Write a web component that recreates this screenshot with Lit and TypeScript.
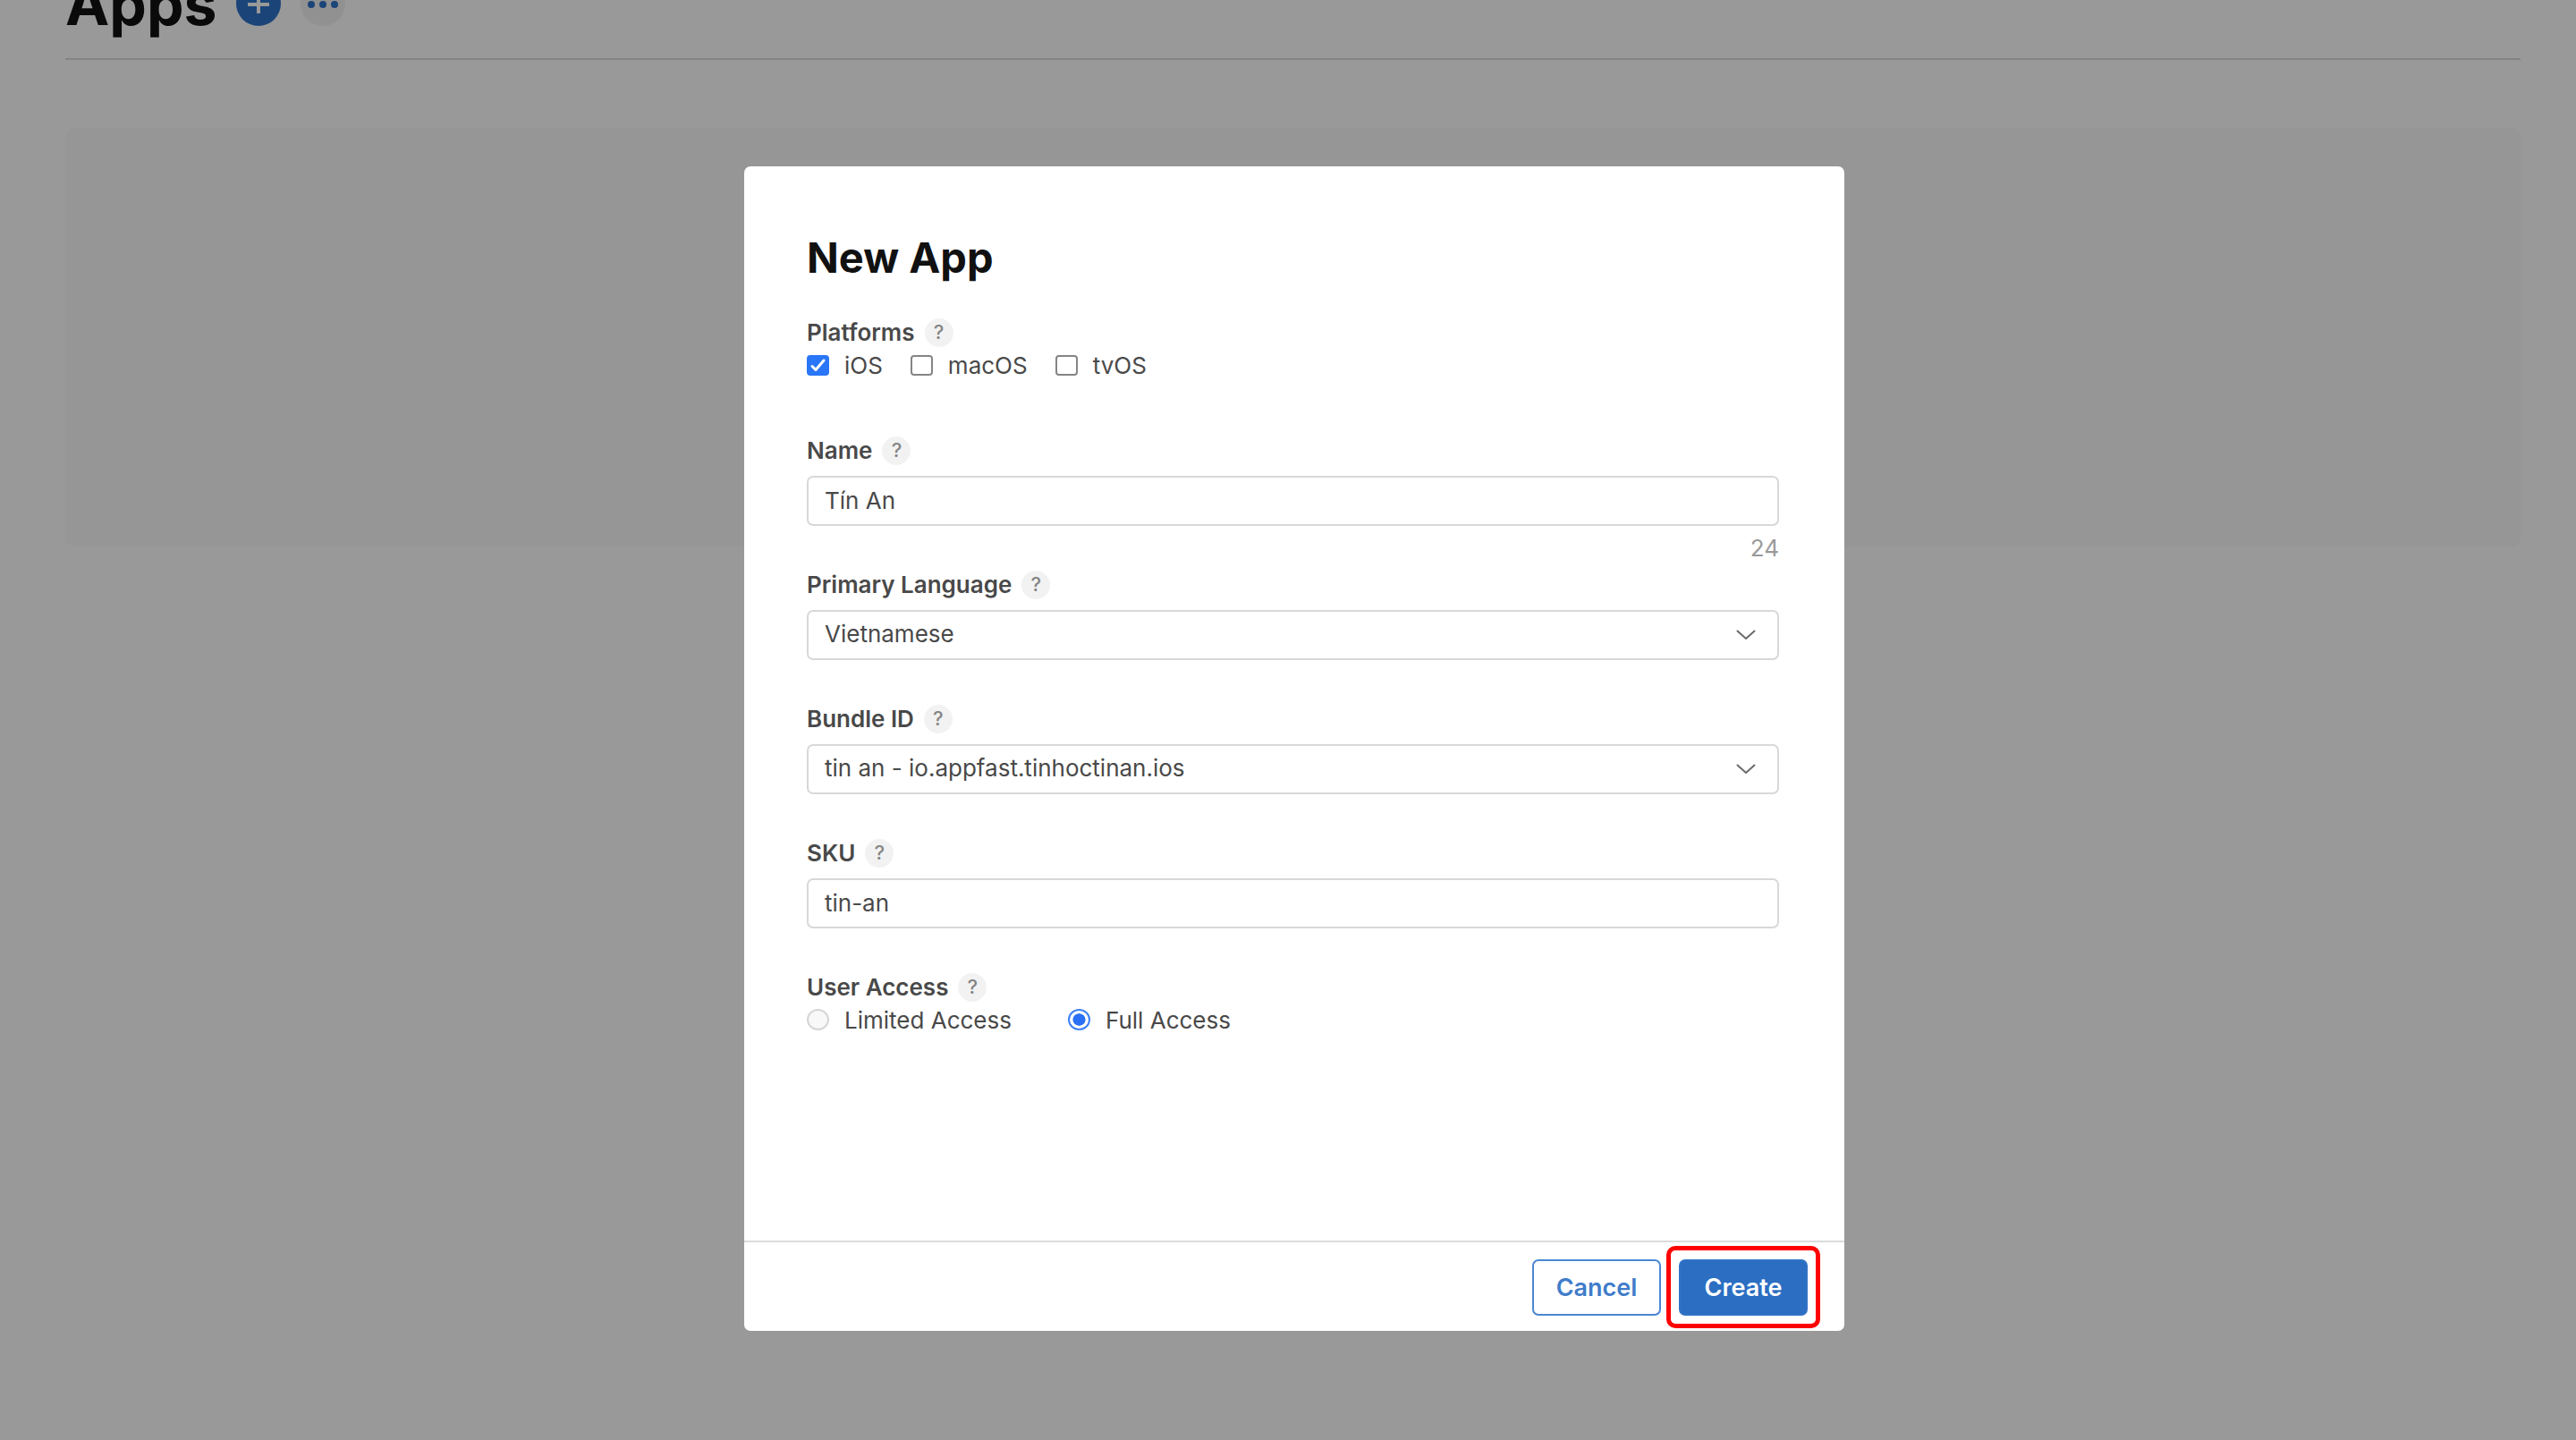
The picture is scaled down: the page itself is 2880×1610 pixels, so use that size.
import { LitElement, html, css, svg, nothing } from "lit";
import { customElement, property, state } from "lit/decorators.js";

const controlStyles = css`
  :host {
    display: block;
    color: #494949;
    font-family: Inter, "Liberation Sans", sans-serif;
    font-size: 26px;
    line-height: 32px;
  }
  * {
    box-sizing: border-box;
  }
  button,
  input,
  select {
    margin: 0;
    font: inherit;
    color: inherit;
  }
`;

@customElement("help-button")
export class HelpButton extends LitElement {
  static styles = [
    controlStyles,
    css`
      .help {
        display: block;
        width: 32px;
        height: 32px;
        padding: 0 0 3px;
        border: 0;
        border-radius: 50%;
        background: #f2f2f2;
        color: #858585;
        font-size: 22px;
        font-weight: 500;
        line-height: 28px;
        text-align: center;
      }
    `,
  ];

  render() {
    return html`<button class="help" type="button">?</button>`;
  }
}

@customElement("choice-option")
export class ChoiceOption extends LitElement {
  @property() kind: "checkbox" | "radio" = "checkbox";
  @property() label = "";
  @property() group = "";
  @property({ type: Boolean }) checked = false;
  @property({ type: Boolean }) disabled = false;

  static styles = [
    controlStyles,
    css`
      .choice {
        display: flex;
        align-items: center;
        gap: 17px;
        height: 42px;
      }
      .mark {
        display: grid;
        place-items: center;
        padding-bottom: 2px;
      }
      .mark > * {
        grid-area: 1 / 1;
      }
      .box {
        appearance: none;
        width: 25px;
        height: 23px;
        border: 2px solid #858585;
        border-radius: 4px;
        background: #fff;
      }
      .box:checked {
        border-color: #2a76f8;
        background: #2a76f8;
      }
      .box[type="radio"] {
        height: 24px;
        border-radius: 50%;
      }
      .box[type="radio"]:checked {
        border-color: #3d81f7;
        background: radial-gradient(closest-side, #2a70f5 64%, #fff 70%);
      }
      .box:disabled {
        border-color: #d6d6d6;
        background: #f8f8f8;
      }
      .tick {
        width: 19px;
        height: 17px;
        pointer-events: none;
      }
    `,
  ];

  render() {
    return html`
      <label class="choice">
        <span class="mark">
          <input
            class="box"
            type=${this.kind}
            name=${this.group}
            .checked=${this.checked}
            ?disabled=${this.disabled}
            @change=${this.onChange}
          />
          ${this.kind === "checkbox" && this.checked
            ? html`<svg class="tick" viewBox="0 0 19 17" fill="none" stroke="#fff" stroke-width="3">
                <path d="M3 9.5 L7 13.5 L16 3" stroke-linecap="round" stroke-linejoin="round" />
              </svg>`
            : nothing}
        </span>
        <span>${this.label}</span>
      </label>
    `;
  }

  private onChange(event: Event) {
    this.checked = (event.target as HTMLInputElement).checked;
    this.dispatchEvent(new CustomEvent("pick", { bubbles: true }));
  }
}

@customElement("form-field")
export class FormField extends LitElement {
  @property() label = "";
  @property() value = "";
  @property() kind: "text" | "select" = "text";
  @property() counter = "";

  static styles = [
    controlStyles,
    css`
      .field {
        height: 150px;
      }
      .head {
        display: flex;
        align-items: center;
        gap: 11px;
        margin-bottom: 12px;
      }
      .label {
        font-weight: 600;
      }
      .slot {
        display: grid;
        align-items: center;
      }
      .slot > * {
        grid-area: 1 / 1;
      }
      .control {
        appearance: none;
        width: 100%;
        height: 56px;
        padding: 0 18px 2px;
        border: 2px solid #d8d8d8;
        border-radius: 7px;
        background: #fff;
      }
      .chevron {
        justify-self: end;
        width: 22px;
        height: 12px;
        margin-right: 26px;
        pointer-events: none;
      }
      .counter {
        padding-top: 9px;
        color: #9a9a9a;
        text-align: right;
      }
    `,
  ];

  render() {
    return html`
      <div class="field">
        <div class="head">
          <label class="label" for="control">${this.label}</label>
          <help-button></help-button>
        </div>
        <div class="slot">
          ${this.kind === "select"
            ? html`
                <select class="control" id="control">
                  <option>${this.value}</option>
                </select>
                <svg class="chevron" viewBox="0 0 22 12" fill="none" stroke="#6a6a6a" stroke-width="2">
                  <path d="M1.5 1.5 L11 10 L20.5 1.5" stroke-linecap="round" stroke-linejoin="round" />
                </svg>
              `
            : html`<input class="control" id="control" type="text" .value=${this.value} />`}
        </div>
        ${this.counter ? html`<div class="counter">${this.counter}</div>` : nothing}
      </div>
    `;
  }
}

@customElement("app-root")
export class AppRoot extends LitElement {
  @state() private platforms = [
    { name: "iOS", checked: true },
    { name: "macOS", checked: false },
    { name: "tvOS", checked: false },
  ];

  @state() private access = [
    { name: "Limited Access", checked: false, disabled: true },
    { name: "Full Access", checked: true, disabled: false },
  ];

  static styles = [
    controlStyles,
    css`
      :host {
        height: 100vh;
        overflow: hidden;
        background: #fff;
      }
      .page {
        margin-top: -36px;
        padding: 0 62px 0 73px;
      }
      .topbar {
        display: flex;
        align-items: center;
        gap: 22px;
        height: 103px;
        padding-bottom: 22px;
        border-bottom: 2px solid #dadada;
      }
      .title {
        margin: 0;
        color: #111;
        font-size: 66px;
        font-weight: 700;
        line-height: 80px;
      }
      .round {
        display: grid;
        place-items: center;
        width: 50px;
        height: 50px;
        padding: 0;
        border: 0;
        border-radius: 50%;
        background: #2d74c9;
      }
      .round.more {
        background: #f2f2f2;
      }
      .glyph {
        display: block;
        width: 50px;
        height: 50px;
      }
      .panel {
        height: 468px;
        margin-top: 76px;
        border-radius: 10px;
        background: #fafafa;
      }
      .overlay {
        position: fixed;
        inset: 0;
        display: flex;
        align-items: flex-start;
        justify-content: center;
        padding: 186px 0 0 14px;
        background: rgba(0, 0, 0, 0.4);
      }
      .dialog {
        width: min(1230px, 100%);
        border-radius: 7px;
        background: #fff;
      }
      .body {
        padding: 74px 73px 225px 70px;
      }
      .heading {
        margin: 0 0 40px;
        color: #111;
        font-size: 47px;
        font-weight: 700;
        line-height: 56px;
      }
      .group {
        min-width: 0;
        margin: 0;
        padding: 0;
        border: 0;
      }
      .platforms {
        margin-bottom: 58px;
      }
      .legend {
        display: flex;
        align-items: center;
        gap: 11px;
        height: 32px;
        padding: 0;
        font-weight: 600;
      }
      .choices {
        display: flex;
        gap: 31px;
      }
      .choices.wide {
        gap: 63px;
      }
      .footer {
        display: flex;
        justify-content: flex-end;
        gap: 20px;
        padding: 19px 41px 17px;
        border-top: 2px solid #dcdcdc;
      }
      .action {
        display: block;
        width: 144px;
        height: 63px;
        padding: 0;
        border: 2px solid #4a87d2;
        border-radius: 7px;
        background: #fff;
        color: #3f7cca;
        font-size: 27px;
        font-weight: 600;
      }
      .action.primary {
        border-color: #3273c6;
        background: #2b6ec2;
        color: #fff;
      }
      .highlight {
        position: relative;
      }
      .highlight::after {
        content: "";
        position: absolute;
        inset: -15px -14px -14px;
        border: 5px solid #f00;
        border-radius: 10px;
        pointer-events: none;
      }
    `,
  ];

  render() {
    return html`
      <main class="page">
        <header class="topbar">
          <h1 class="title">Apps</h1>
          <button class="round" type="button" aria-label="Add">
            <svg class="glyph" viewBox="0 0 50 50" stroke="#fff" stroke-width="4">
              <path d="M13 26 H37 M25 15 V36" />
            </svg>
          </button>
          <button class="round more" type="button" aria-label="More">
            <svg class="glyph" viewBox="0 0 50 50" fill="#2d74c9">
              ${[12, 25, 38].map((x) => svg`<circle cx=${x} cy="26" r="4" />`)}
            </svg>
          </button>
        </header>
        <section class="panel"></section>
      </main>
      <div class="overlay">
        <form class="dialog" role="dialog" aria-labelledby="heading" @submit=${this.onSubmit}>
          <div class="body">
            <h2 class="heading" id="heading">New App</h2>
            <fieldset class="group platforms">
              <legend class="legend">Platforms <help-button></help-button></legend>
              <div class="choices">
                ${this.platforms.map(
                  (p) => html`<choice-option .label=${p.name} .checked=${p.checked}></choice-option>`
                )}
              </div>
            </fieldset>
            <form-field label="Name" value="Tín An" counter="24"></form-field>
            <form-field label="Primary Language" kind="select" value="Vietnamese"></form-field>
            <form-field label="Bundle ID" kind="select" value="tin an - io.appfast.tinhoctinan.ios"></form-field>
            <form-field label="SKU" value="tin-an"></form-field>
            <fieldset class="group">
              <legend class="legend">User Access <help-button></help-button></legend>
              <div class="choices wide">
                ${this.access.map(
                  (a, i) => html`<choice-option
                    kind="radio"
                    group="access"
                    .label=${a.name}
                    .checked=${a.checked}
                    .disabled=${a.disabled}
                    @pick=${() => this.pickAccess(i)}
                  ></choice-option>`
                )}
              </div>
            </fieldset>
          </div>
          <footer class="footer">
            <button class="action" type="button">Cancel</button>
            <div class="highlight">
              <button class="action primary" type="submit">Create</button>
            </div>
          </footer>
        </form>
      </div>
    `;
  }

  private pickAccess(index: number) {
    this.access = this.access.map((a, i) => ({ ...a, checked: i === index }));
  }

  private onSubmit(event: Event) {
    event.preventDefault();
  }
}
